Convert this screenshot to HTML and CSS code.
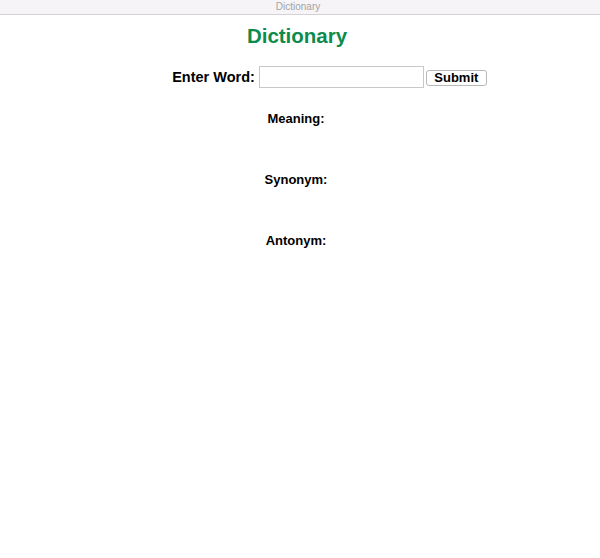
FILE: index.html
```html
<!DOCTYPE html>
<html>
<head>
<meta charset="utf-8">
<title>Dictionary</title>
<link rel="stylesheet" href="styles.css">
</head>
<body>
<div class="titlebar">Dictionary</div>
<main class="page">
  <h1 class="title">Dictionary</h1>
  <form class="search">
    <label class="search-label" for="word">Enter Word:</label>
    <input class="search-input" id="word" type="text">
    <button class="search-btn" type="button">Submit</button>
  </form>
  <section class="result"><h4 class="result-label">Meaning:</h4></section>
  <section class="result"><h4 class="result-label">Synonym:</h4></section>
  <section class="result"><h4 class="result-label">Antonym:</h4></section>
</main>
</body>
</html>
```
FILE: styles.css
```css
html, body {
  margin: 0;
  padding: 0;
  background: #ffffff;
}
body {
  font-family: "Liberation Sans", Arial, sans-serif;
  color: #000;
}
.titlebar {
  height: 14px;
  line-height: 14px;
  background: #f6f4f6;
  border-bottom: 1px solid #d4d2d4;
  text-align: center;
  font-size: 10px;
  color: #a3a3a3;
  padding-right: 4px;
}
.page {
  display: flex;
  flex-direction: column;
  align-items: center;
  padding-right: 8px;
}
.title {
  margin: 9px 0 0 0;
  font-size: 20.5px;
  line-height: 23px;
  font-weight: bold;
  color: #0c8c4c;
  padding-left: 2px;
}
.search {
  display: flex;
  align-items: center;
  margin: 19px 0 0 0;
  padding-left: 67px;
}
.search-label {
  font-size: 14.5px;
  font-weight: bold;
}
.search-input {
  width: 161px;
  height: 18px;
  margin: 0 0 0 4px;
  padding: 1px;
  border: 1px solid #c8c8c8;
  box-sizing: content-box;
  font-size: 13px;
}
.search-btn {
  width: 61px;
  height: 16px;
  margin: 2px 0 0 2px;
  padding: 0;
  border: 1px solid #b8b8b8;
  border-radius: 3px;
  background: #ffffff;
  font-family: "Liberation Sans", Arial, sans-serif;
  font-size: 13px;
  font-weight: bold;
  line-height: 14px;
  color: #000;
}
.result {
  height: 61px;
}
.result-label {
  margin: 0;
  font-size: 13px;
  line-height: 15px;
  font-weight: bold;
}
.result:first-of-type {
  margin-top: 23px;
}
```
